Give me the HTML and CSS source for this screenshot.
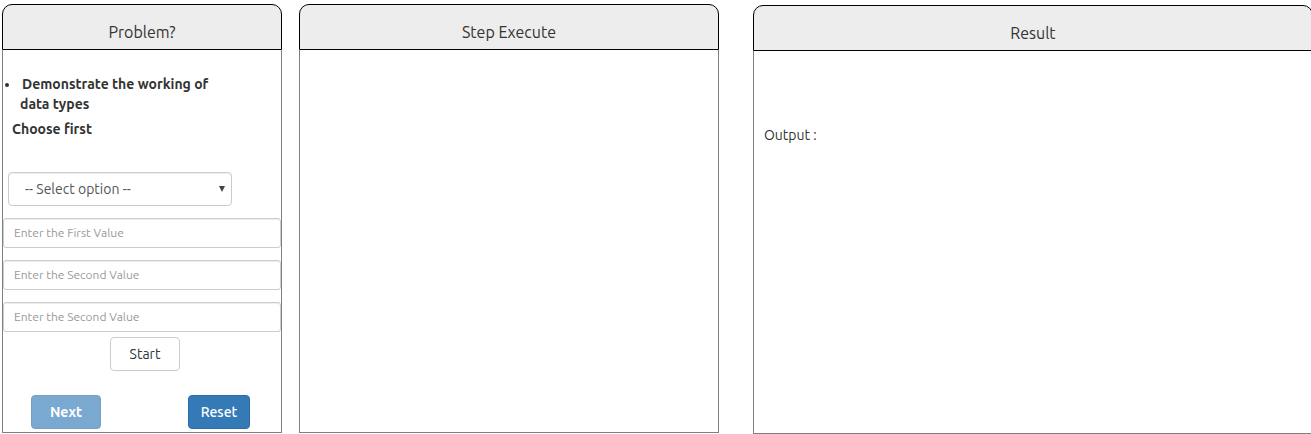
FILE: index.html
```html
<!DOCTYPE html>
<html lang="en">
<head>
<meta charset="utf-8">
<title>Data types</title>
<link rel="stylesheet" href="styles.css">
</head>
<body>
<main class="board">
  <section class="panel panel-problem">
    <h2 class="panel-title">Problem?</h2>
    <div class="panel-body">
      <ul class="tasks"><li>Demonstrate the working of data types</li></ul>
      <label class="choose" for="option">Choose first</label>
      <div class="select-wrap">
        <select class="control select" id="option"><option>-- Select option --</option></select>
        <svg class="caret" viewBox="0 0 6 6" aria-hidden="true"><path d="M0 0h6L3 6z"/></svg>
      </div>
      <div class="fields">
        <input class="control field" type="text" aria-label="First value" placeholder="Enter the First Value">
        <input class="control field" type="text" aria-label="Second value" placeholder="Enter the Second Value">
        <input class="control field" type="text" aria-label="Third value" placeholder="Enter the Second Value">
      </div>
      <div class="start-row">
        <button class="btn btn-start" type="button">Start</button>
      </div>
      <div class="actions">
        <button class="btn btn-primary btn-next" type="button" disabled>Next</button>
        <button class="btn btn-primary btn-reset" type="button">Reset</button>
      </div>
    </div>
  </section>
  <section class="panel panel-steps">
    <h2 class="panel-title">Step Execute</h2>
    <div class="panel-body"></div>
  </section>
  <section class="panel panel-result">
    <h2 class="panel-title">Result</h2>
    <div class="panel-body"><p class="output">Output :</p></div>
  </section>
</main>
</body>
</html>
```
FILE: styles.css
```css
* { box-sizing: border-box; }

body {
  margin: 0;
  overflow: hidden;
  background: #fff;
  color: #333;
  font: 14px/20px Ubuntu, "Noto Sans", sans-serif;
}

.board {
  display: flex;
  margin: 4px -2px 0 2px;
}

.panel {
  display: flex;
  flex-direction: column;
  min-width: 0;
}

.panel-problem { flex: 280 1 0; margin-bottom: 1px; }
.panel-steps { flex: 420 1 0; margin: 0 34px 1px 17px; }
.panel-result { flex: 560 1 0; margin-top: 1px; }

.panel-title {
  margin: 0;
  padding: 17px 8px 7px;
  border: 1px solid #000;
  border-radius: 10px 10px 0 0;
  background: #ededed;
  font-size: 16px;
  font-weight: 400;
  line-height: 20px;
  text-align: center;
}

.panel-body {
  flex: 1;
  padding: 24px 0 3px;
  border: 1px solid #808080;
  border-top: 0;
}

.tasks {
  margin: 0;
  padding: 0 60px 5px 17px;
  font-weight: 700;
  text-indent: 2px;
}

.choose {
  display: block;
  padding-left: 9px;
  font-weight: 700;
}

.control {
  display: block;
  width: 100%;
  border: 1px solid #ccc;
  background: #fff;
  box-shadow: inset 0 1px 1px rgba(0, 0, 0, 0.075);
  font-family: inherit;
}

.select-wrap {
  position: relative;
  margin: 33px 49px 12px 5px;
}

.select {
  height: 34px;
  padding: 0 16px;
  border-radius: 4px;
  color: #555;
  font-size: 14px;
  appearance: none;
}

.caret {
  position: absolute;
  top: 14px;
  right: 7px;
  width: 6px;
  height: 6px;
  fill: #444;
  pointer-events: none;
}

.fields {
  display: grid;
  gap: 12px;
}

.field {
  height: 30px;
  padding: 0 10px 2px;
  border-radius: 3px;
  font-size: 12px;
}

.field::placeholder { color: #999; }

.btn {
  height: 34px;
  padding: 0;
  border: 1px solid #ccc;
  border-radius: 4px;
  background: #fff;
  color: #333;
  font: inherit;
}

.start-row {
  display: flex;
  justify-content: center;
  padding: 5px 0 24px 6px;
}

.btn-start { width: 70px; }

.actions {
  display: flex;
  justify-content: space-between;
  padding: 0 31px 0 28px;
}

.btn-primary {
  border-color: #2e6da4;
  background: #337ab7;
  color: #fff;
}

.btn-next {
  width: 70px;
  font-weight: 700;
  opacity: 0.65;
}

.btn-reset {
  width: 62px;
  font-weight: 500;
}

.output {
  margin: 0;
  padding: 50px 10px 0;
}
```
